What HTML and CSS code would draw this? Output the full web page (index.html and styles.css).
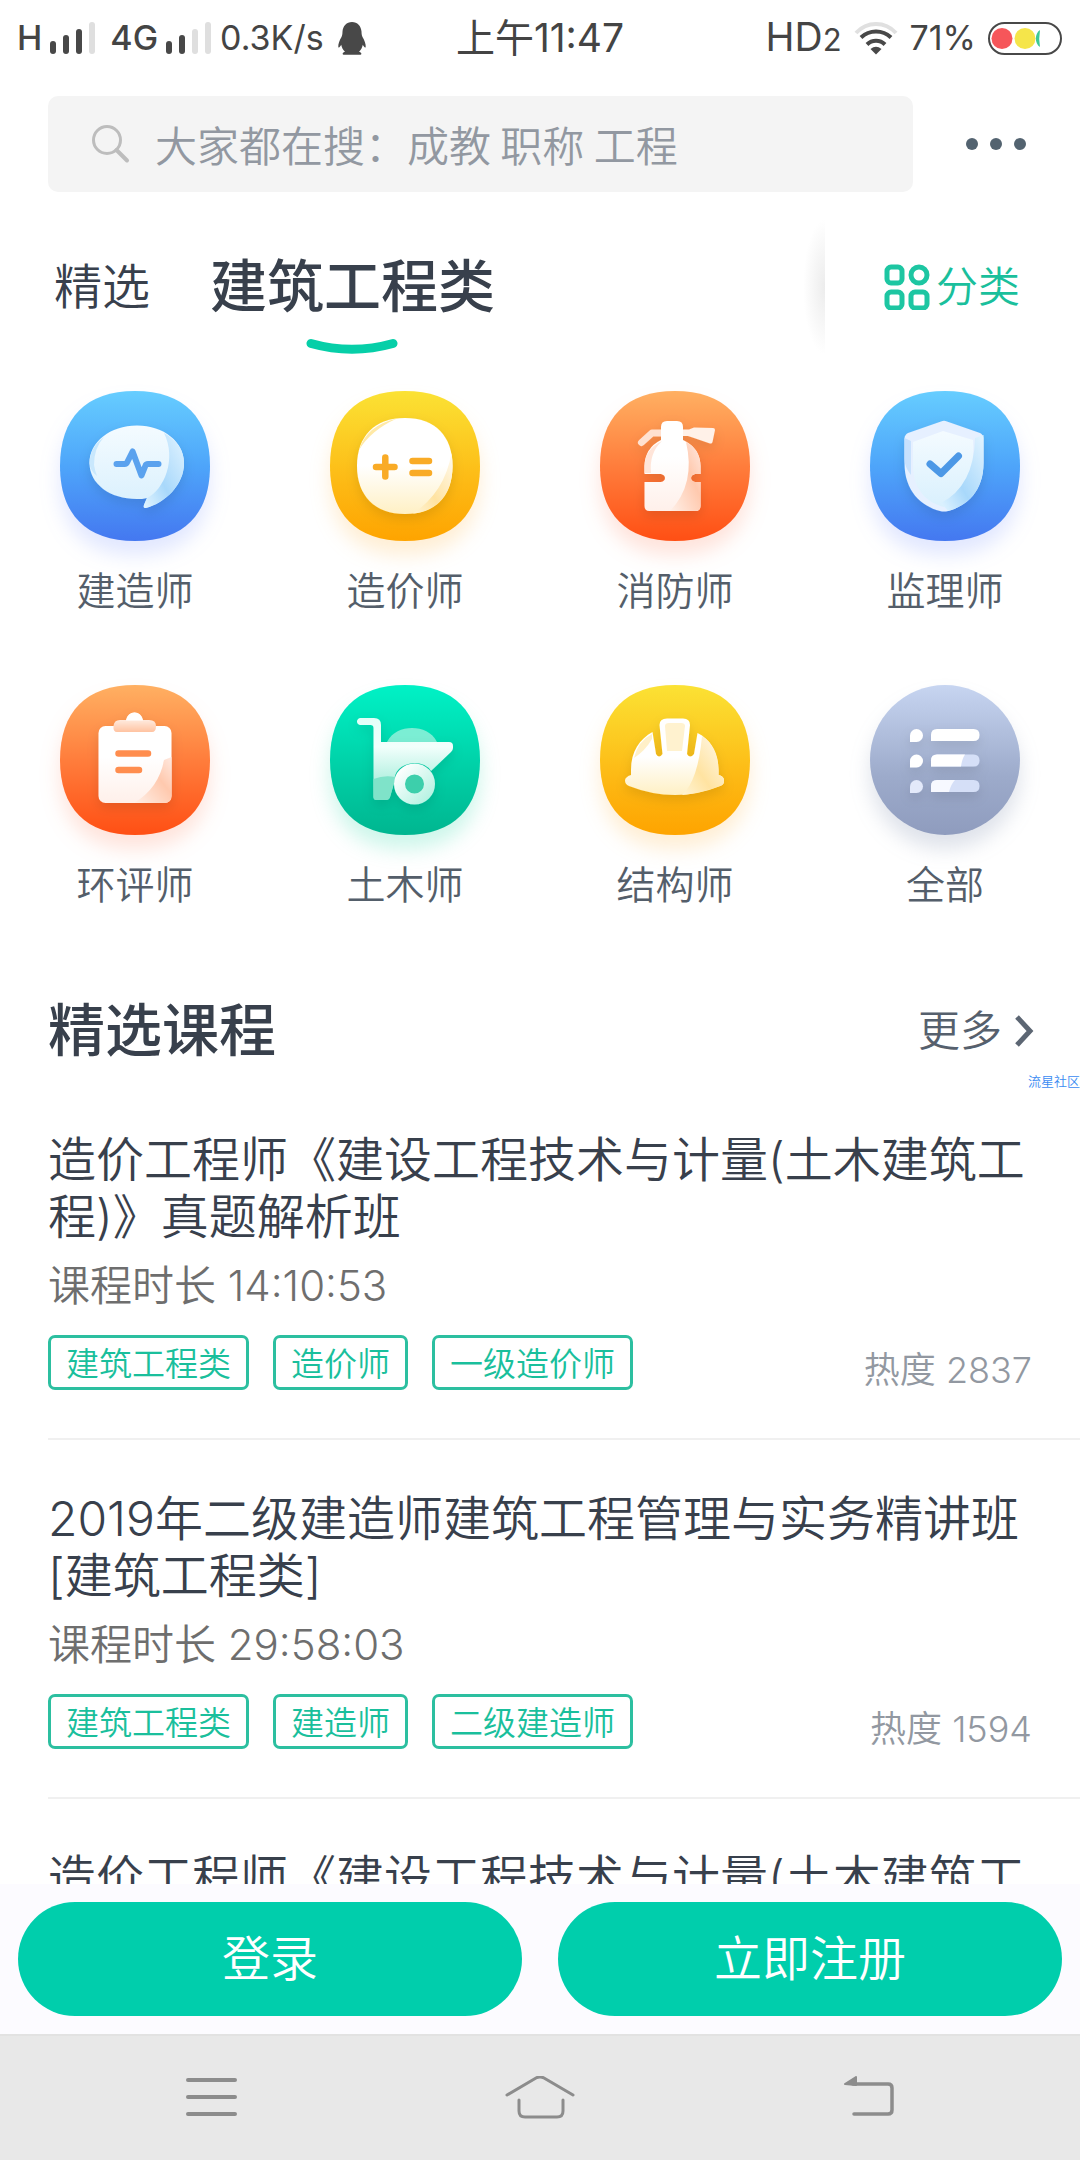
FILE: index.html
```html
<!DOCTYPE html>
<html lang="zh-CN">
<head>
<meta charset="utf-8">
<meta name="viewport" content="width=device-width, initial-scale=1">
<title>建筑工程类</title>
<link rel="stylesheet" href="styles.css">
</head>
<body>
<div class="app">
  <header class="statusbar">
    <div class="status-group">
      <span class="status-net">H</span>
      <svg class="signal" width="46" height="33" viewBox="0 0 46 33" aria-hidden="true">
        <g fill="#484848"><rect x="0" y="19" width="6" height="13" rx="3"/><rect x="13" y="13" width="6" height="19" rx="3"/><rect x="26" y="7" width="6" height="25" rx="3"/></g>
        <rect x="39" y="0" width="6" height="32" rx="3" fill="#dfdfdf"/>
      </svg>
      <span class="status-net">4G</span>
      <svg class="signal" width="46" height="33" viewBox="0 0 46 33" aria-hidden="true">
        <g fill="#484848"><rect x="0" y="19" width="6" height="13" rx="3"/><rect x="13" y="13" width="6" height="19" rx="3"/></g>
        <g fill="#dfdfdf"><rect x="26" y="7" width="6" height="25" rx="3"/><rect x="39" y="0" width="6" height="32" rx="3"/></g>
      </svg>
      <span class="status-speed">0.3K/s</span>
      <svg class="penguin" width="28" height="33" viewBox="0 0 28 33" aria-hidden="true">
        <path fill="#484848" d="M14 0C8.500 0 5 4 4.500 9.500C4.400 12 4.300 13 3.500 15C1.500 18.500 0 22 .3 25C.8 26.600 2.300 24.500 3.200 22.800C3.800 25.800 5 28 7 29.700C4.500 30.200 4 32.500 5.500 32.700H12.500C13.500 32.700 14.500 32.700 15.500 32.700H22.500C24 32.500 23.500 30.200 21 29.700C23 28 24.200 25.800 24.800 22.800C25.700 24.500 27.200 26.600 27.700 25C28 22 26.500 18.500 24.500 15C23.700 13 23.600 12 23.500 9.500C23 4 19.500 0 14 0Z"/>
      </svg>
    </div>
    <time class="status-time">上午11:47</time>
    <div class="status-group status-right">
      <span class="status-hd">HD<small>2</small></span>
      <svg width="44" height="33" viewBox="0 0 44 33" fill="none" aria-hidden="true">
        <path d="M2 11C13-1 31-1 42 11" stroke="#e0e0e0" stroke-width="4"/>
        <path d="M7 15.500C15.500 7.500 28.500 7.500 37 15.500M13 22.500C18 17.500 26 17.500 31 22.500" stroke="#484848" stroke-width="4"/>
        <path d="M16.500 27Q22 22.500 27.500 27L22 32.500Z" fill="#484848"/>
      </svg>
      <span class="status-pct">71%</span>
      <svg width="75" height="33" viewBox="0 0 75 33" aria-hidden="true">
        <rect x="1" y="1" width="72" height="31" rx="15.500" fill="#fff" stroke="#484848" stroke-width="2"/>
        <circle cx="14" cy="16.500" r="10.500" fill="#f6565a"/><circle cx="37" cy="16.500" r="10.500" fill="#f5e54a"/>
        <path d="M52 8C46.500 11.500 46.500 21.500 52 25Q50.500 16.500 52 8Z" fill="#3cc995"/>
      </svg>
    </div>
  </header>

  <form class="searchrow" role="search">
    <label class="searchbox">
      <svg width="40" height="40" viewBox="0 0 40 40" fill="none" stroke="#bdbdbd" aria-hidden="true">
        <circle cx="16" cy="16" r="13.500" stroke-width="3"/><path d="M25.500 26L36 36.500" stroke-width="4" stroke-linecap="round"/>
      </svg>
      <input type="search" aria-label="搜索" placeholder="大家都在搜：成教 职称 工程">
    </label>
    <button class="dots" type="button" aria-label="更多操作">
      <svg width="62" height="14" viewBox="0 0 62 14" fill="#536370"><circle cx="7" cy="7" r="6"/><circle cx="31" cy="7" r="6"/><circle cx="55" cy="7" r="6"/></svg>
    </button>
  </form>

  <nav class="tabs">
    <a class="tab" href="#featured">精选</a>
    <a class="tab tab-active" href="#building">建筑工程类
      <svg class="tab-mark" width="92" height="18" viewBox="0 0 92 18" fill="none" aria-hidden="true"><path d="M5 5.500Q46 17 87 5.500" stroke="#06cfa8" stroke-width="9" stroke-linecap="round"/></svg>
    </a>
    <span class="tab-shade"></span>
    <a class="classify" href="#all">
      <svg width="46" height="46" viewBox="0 0 46 46" fill="none" stroke="#1dc6a2" stroke-width="5" aria-hidden="true">
        <rect x="3" y="3" width="15" height="16" rx="4"/><circle cx="35" cy="11" r="8"/><rect x="3" y="28" width="15" height="16" rx="4"/><rect x="27" y="28" width="16" height="16" rx="4"/>
      </svg>分类
    </a>
  </nav>

  <main class="content">
    <svg class="defs" width="0" height="0" aria-hidden="true">
      <defs>
        <linearGradient id="blue" x1="0" y1="0" x2="0" y2="1"><stop offset="0" stop-color="#66cdff"/><stop offset=".5" stop-color="#4ea5fa"/><stop offset="1" stop-color="#4478f0"/></linearGradient>
        <linearGradient id="yellow" x1="0" y1="0" x2="0" y2="1"><stop offset="0" stop-color="#fbe234"/><stop offset=".6" stop-color="#fdba15"/><stop offset="1" stop-color="#fea400"/></linearGradient>
        <linearGradient id="orange" x1="0" y1="0" x2="0" y2="1"><stop offset="0" stop-color="#ffb062"/><stop offset=".5" stop-color="#ff7d3c"/><stop offset="1" stop-color="#ff4f14"/></linearGradient>
        <linearGradient id="green" x1="0" y1="0" x2="0" y2="1"><stop offset="0" stop-color="#00f2c6"/><stop offset=".6" stop-color="#00cda4"/><stop offset="1" stop-color="#00b690"/></linearGradient>
        <linearGradient id="grey" x1="0" y1="0" x2="0" y2="1"><stop offset="0" stop-color="#c7d5f1"/><stop offset=".6" stop-color="#9dabcb"/><stop offset="1" stop-color="#8f9cbe"/></linearGradient>
        <linearGradient id="w-blue" x1="0" y1="0" x2="0" y2="1"><stop offset="0" stop-color="#f4fbff"/><stop offset="1" stop-color="#d9f0fd"/></linearGradient>
        <linearGradient id="s-blue" x1="1" y1="0" x2="0" y2="1"><stop offset="0" stop-color="#e3f4ff"/><stop offset=".6" stop-color="#a8d8fb"/><stop offset="1" stop-color="#e3f5ff"/></linearGradient>
        <linearGradient id="w-yellow" x1="0" y1="0" x2="0" y2="1"><stop offset=".5" stop-color="#fff"/><stop offset="1" stop-color="#fff0c4"/></linearGradient>
        <linearGradient id="s-yellow" x1="1" y1="0" x2="0" y2="1"><stop offset="0" stop-color="#fffaf0"/><stop offset=".6" stop-color="#ffe3a1"/><stop offset="1" stop-color="#fff4d5"/></linearGradient>
        <linearGradient id="w-orange" x1="0" y1="0" x2="0" y2="1"><stop offset=".4" stop-color="#fff"/><stop offset="1" stop-color="#fff0ea"/></linearGradient>
        <linearGradient id="s-orange" x1="1" y1="0" x2="0" y2="1"><stop offset="0" stop-color="#ffe9e0"/><stop offset=".4" stop-color="#ffc9ae"/><stop offset="1" stop-color="#fff0e8"/></linearGradient>
        <linearGradient id="clip" x1="0" y1="0" x2="0" y2="1"><stop offset=".2" stop-color="#fff6f0"/><stop offset="1" stop-color="#ffc3a1"/></linearGradient>
        <linearGradient id="w-green" x1="0" y1="0" x2="0" y2="1"><stop offset="0" stop-color="#e2fff8"/><stop offset=".35" stop-color="#f2fffc"/><stop offset="1" stop-color="#8ee8d0"/></linearGradient>
        <linearGradient id="wheel" x1="0" y1="0" x2="1" y2="1"><stop offset="0" stop-color="#fff"/><stop offset="1" stop-color="#b5f2e2"/></linearGradient>
        <filter id="inner" x="-30%" y="-30%" width="160%" height="170%"><feDropShadow dx="0" dy="5" stdDeviation="6" flood-color="#000" flood-opacity=".1"/></filter>
        <path id="tile" d="M75 0C124 0 150 27 150 75S124 150 75 150S0 123 0 75S26 0 75 0Z"/>
      </defs>
    </svg>

    <section class="categories">
      <a class="cat" href="#c1">
        <svg class="cat-icon glow-blue" width="150" height="150" viewBox="0 0 150 150" aria-hidden="true">
          <use href="#tile" fill="url(#blue)"/>
          <g filter="url(#inner)">
            <path d="M77 34.500C104 34.500 124 51 124 72C124 94 105 112 85.500 117Q83 117 84 114L87 107C84 108 80 108 77 108C50 108 29.500 93 29.500 72C29.500 51 50 34.500 77 34.500Z" fill="url(#w-blue)"/>
            <path d="M104 42C118 50 124 60 124 72C124 94 105 112 85.500 117Q83 117 84 114L87 107C104 99 117 68 104 42Z" fill="url(#s-blue)"/>
            <path d="M44 46Q34 57 34 74Q35 80 37 85Q30 80 29.500 72Q30 56 44 46Z" fill="#c9e8fd"/>
          </g>
          <path d="M56.500 73H64.500Q66.500 73 67.300 71L72.600 60.500L81.500 84.500L85.500 74.500Q86 73 88 73H98.500" fill="none" stroke="#5ba2ee" stroke-width="6" stroke-linecap="round" stroke-linejoin="round"/>
        </svg>
        <span>建造师</span>
      </a>
      <a class="cat" href="#c2">
        <svg class="cat-icon glow-yellow" width="150" height="150" viewBox="0 0 150 150" aria-hidden="true">
          <use href="#tile" fill="url(#yellow)"/>
          <g filter="url(#inner)">
            <path d="M75 27C105 27 122.500 45 122.500 75S105 123 75 123S27 105 27 75S45 27 75 27Z" fill="url(#w-yellow)"/>
            <path d="M121.500 62Q115 101 83 122.600C108 120 122.500 103 122.500 75Q122.500 68 121.500 62Z" fill="url(#s-yellow)"/>
            <path d="M67 27.500Q37 34 29 59Q41 39 67 27.500Z" fill="#ffe9a6"/>
          </g>
          <path d="M46 76H64.500M55.300 66.500V85.500M82.500 70H99M82.500 82H99" fill="none" stroke="#f9ab26" stroke-width="6.500" stroke-linecap="round"/>
        </svg>
        <span>造价师</span>
      </a>
      <a class="cat" href="#c3">
        <svg class="cat-icon glow-orange" width="150" height="150" viewBox="0 0 150 150" aria-hidden="true">
          <use href="#tile" fill="url(#orange)"/>
          <g filter="url(#inner)">
            <path d="M61 42H52L41.500 51.500" fill="none" stroke="#ffe1d0" stroke-width="7" stroke-linecap="round" stroke-linejoin="round"/>
            <path d="M82 38.500H89L94 36.500L113 37Q115 37 115 39L112.500 51Q112 53 110 52.500L94 47L88 45H82Z" fill="#fff1e8"/>
            <path d="M61 36Q61 30 67 30H77Q83 30 83 36V49Q100 57 100.500 75V83H95Q91 84 91 87T95 91H100.500V115Q100.500 120 95.500 120H49.500Q44.500 120 44.500 115V91H61Q65 90 65 87T61 83H44.500V75Q45 57 61 49Z" fill="url(#w-orange)"/>
            <path d="M86 51Q100 58 100.500 75V83H95Q91 84 91 87T95 91H100.500V115Q100.500 120 95.500 120H70Q96 93 86 51Z" fill="url(#s-orange)"/>
            <path d="M62 50Q49 62 51 82H44.500V75Q45 58 62 50Z" fill="#ffe5d9"/>
          </g>
        </svg>
        <span>消防师</span>
      </a>
      <a class="cat" href="#c4">
        <svg class="cat-icon glow-blue" width="150" height="150" viewBox="0 0 150 150" aria-hidden="true">
          <use href="#tile" fill="url(#blue)"/>
          <g filter="url(#inner)">
            <path d="M71 30.500Q74 29 77 30.500L110 42Q113.500 44 113.500 47.500V72C113.500 100 97 115 78 120Q74 121 70 120C51 115 34.500 100 34.500 72V47.500Q34.500 44 38 42Z" fill="#e6f0ff"/>
            <path d="M73 40L43 51V74C43 100 58 112 74 116C93 108 105 84 103 49Z" fill="url(#w-blue)"/>
            <path d="M105 47L113.500 44V72C113.500 100 97 115 78 120L71 112Q104 95 105 47Z" fill="url(#s-blue)"/>
            <path d="M34.500 47L41 50V84Q34.500 76 34.500 68Z" fill="#c8e1fd"/>
          </g>
          <path d="M60 73L71 82.500L88.500 65" fill="none" stroke="#4c98e6" stroke-width="7" stroke-linecap="round" stroke-linejoin="round"/>
        </svg>
        <span>监理师</span>
      </a>
      <a class="cat" href="#c5">
        <svg class="cat-icon glow-orange" width="150" height="150" viewBox="0 0 150 150" aria-hidden="true">
          <use href="#tile" fill="url(#orange)"/>
          <g filter="url(#inner)">
            <rect x="38.500" y="41" width="73" height="77" rx="7" fill="url(#w-orange)"/>
            <path d="M111.500 72V111Q111.500 118 104.500 118H74Q99 103 104 75Z" fill="url(#s-orange)"/>
            <path d="M53.500 41Q54 35 60 35H66Q68 27.500 74.500 27.500T83 35H89Q96 35 96 41Q96 47 92 47H57Q53 47 53.500 41Z" fill="url(#clip)"/>
            <path d="M66 35.500Q68 27.500 74.500 27.500T83 35.500Z" fill="#fff"/>
          </g>
          <path d="M58.500 68.500H88M58.500 85H79" stroke="#ff8d4e" stroke-width="6.500" stroke-linecap="round"/>
        </svg>
        <span>环评师</span>
      </a>
      <a class="cat" href="#c6">
        <svg class="cat-icon glow-green" width="150" height="150" viewBox="0 0 150 150" aria-hidden="true">
          <use href="#tile" fill="url(#green)"/>
          <path d="M57 57C62 47 72 43 82 43S102 47 107 57Z" fill="#7beed4"/>
          <g filter="url(#inner)">
            <path d="M30 33H44Q51 33 51 40V57H119Q123 57 123 61V63Q123 65 121 67L101 86Q96 78 84 78Q64 80 64 98L60 112Q59 115 56 115H46.500Q43.500 115 43.500 112V43Q43.500 40 40.500 40H30Q27 39 27 36.500T30 33Z" fill="url(#w-green)"/>
            <path d="M43.500 94Q54 90 65 92Q64 96 64 98L60 112Q59 115 56 115H46.500Q43.500 115 43.500 112Z" fill="#7fe3c9"/>
            <circle cx="84.500" cy="99" r="15" fill="#3ccfab" stroke="url(#wheel)" stroke-width="11"/>
          </g>
        </svg>
        <span>土木师</span>
      </a>
      <a class="cat" href="#c7">
        <svg class="cat-icon glow-yellow" width="150" height="150" viewBox="0 0 150 150" aria-hidden="true">
          <use href="#tile" fill="url(#yellow)"/>
          <g filter="url(#inner)">
            <path d="M31 90V85C31 66 40 54 52.500 47L56 69Q59 74 62.500 69L59.500 40Q59.500 33.500 67 33.500H83Q90 33.500 90 40L87 69Q90 74 94 69L97.500 48C110 54 118.500 68 118.500 85V90Q124 91 124 95.500T120 101Q98 110 75 110T29 101Q25 99 25 95.500T31 90Z" fill="url(#w-yellow)"/>
            <path d="M102 51C112 57 118.500 69 118.500 85V90Q124 91 124 95.500T120 101Q102 108 82 110Q98 96 102 51Z" fill="url(#s-yellow)"/>
            <path d="M65 41Q65 38 69 38H81Q85 38 85 41L82 66H67Z" fill="#fff2cf"/>
            <path d="M52 49Q38 56 34 73Q45 66 52 54Z" fill="#fff0c8"/>
          </g>
        </svg>
        <span>结构师</span>
      </a>
      <a class="cat" href="#c8">
        <svg class="cat-icon glow-grey" width="150" height="150" viewBox="0 0 150 150" aria-hidden="true">
          <circle cx="75" cy="75" r="75" fill="url(#grey)"/>
          <g filter="url(#inner)">
            <path d="M46.500 44A6.500 6.500 0 1 1 46.500 57H40V50.500A6.500 6.500 0 0 1 46.500 44ZM46.500 69.500A6.500 6.500 0 1 1 46.500 82.500H40V76A6.500 6.500 0 0 1 46.500 69.500Z" fill="#fff"/>
            <path d="M46.500 95A6.500 6.500 0 1 1 46.500 108H40V101.500A6.500 6.500 0 0 1 46.500 95Z" fill="#e3e9fa"/>
            <path d="M67 44H103.500Q109.500 44 109.500 50T103.500 56H61V50Q61 44 67 44Z" fill="#fff"/>
            <path d="M67 69.500H103.500Q109.500 69.500 109.500 75.500T103.500 81.500H61V75.500Q61 69.500 67 69.500Z" fill="#d5dff7"/>
            <path d="M67 69.500H95Q92 74 91 81.500H61V75.500Q61 69.500 67 69.500Z" fill="#fff"/>
            <path d="M67 95H103.500Q109.500 95 109.500 101T103.500 107H61V101Q61 95 67 95Z" fill="#d5dff7"/>
            <path d="M67 95H85Q81 99 79 107H61V101Q61 95 67 95Z" fill="#f7f9ff"/>
          </g>
        </svg>
        <span>全部</span>
      </a>
    </section>

    <section class="courses">
      <div class="section-head">
        <h2>精选课程</h2>
        <a class="more" href="#more">更多
          <svg width="20" height="32" viewBox="0 0 20 32" fill="none" aria-hidden="true"><path d="M3 2L16 16L3 30" stroke="#5c6673" stroke-width="5"/></svg>
        </a>
        <span class="watermark">流星社区</span>
      </div>
      <article class="course">
        <h3>造价工程师《建设工程技术与计量(土木建筑工程)》真题解析班</h3>
        <p class="duration">课程时长 14:10:53</p>
        <div class="meta"><span class="tag">建筑工程类</span><span class="tag">造价师</span><span class="tag">一级造价师</span><span class="heat">热度 2837</span></div>
      </article>
      <article class="course">
        <h3>2019年二级建造师建筑工程管理与实务精讲班[建筑工程类]</h3>
        <p class="duration">课程时长 29:58:03</p>
        <div class="meta"><span class="tag">建筑工程类</span><span class="tag">建造师</span><span class="tag">二级建造师</span><span class="heat">热度 1594</span></div>
      </article>
      <article class="course">
        <h3>造价工程师《建设工程技术与计量(土木建筑工</h3>
      </article>
    </section>
  </main>

  <div class="actions">
    <button class="action" type="button">登录</button>
    <button class="action" type="button">立即注册</button>
  </div>

  <nav class="sysnav">
    <button type="button" aria-label="菜单"><svg width="72" height="44" viewBox="0 0 72 44" stroke="#8c8c8c" stroke-width="4" stroke-linecap="round"><path d="M13 4H60M13 21H60M13 38H60"/></svg></button>
    <button type="button" aria-label="主页"><svg width="72" height="44" viewBox="0 0 72 44" fill="none" stroke="#8c8c8c" stroke-width="3" stroke-linecap="round" stroke-linejoin="round"><path d="M3 19L32 2Q36 0 40 2L69 19M15 24V35Q15 41 21 41H53Q59 41 59 35V24"/></svg></button>
    <button type="button" aria-label="返回"><svg width="72" height="44" viewBox="0 0 72 44" fill="none" stroke="#8c8c8c" stroke-width="3.500" stroke-linecap="round" stroke-linejoin="round"><path d="M20 8H55Q59 8 59 12V34Q59 38 55 38H21"/><path d="M12 8L23 1V9Z" fill="#8c8c8c" stroke-width="2"/></svg></button>
  </nav>
</div>
</body>
</html>
```
FILE: styles.css
```css
* { box-sizing: border-box; }

body {
  margin: 0;
  background: #fff;
  color: #38404c;
  font-family: Inter, "Noto Sans CJK SC", sans-serif;
  font-weight: 350;
}

h2, h3, p { margin: 0; font-weight: inherit; }
a { color: inherit; text-decoration: none; }
button { border: 0; background: none; padding: 0; font: inherit; color: inherit; }
svg { display: block; flex: none; }

.app { display: flex; flex-direction: column; height: 100vh; }

/* status bar */
.statusbar {
  flex: none;
  display: grid;
  grid-template-columns: 1fr auto 1fr;
  align-items: center;
  height: 76px;
  padding: 0 17px;
  color: #444;
  font-size: 34px;
  font-weight: 400;
  line-height: 40px;
}
.status-group { display: flex; align-items: center; gap: 8px; }
.status-right { justify-content: flex-end; gap: 12px; }
.status-net { font-weight: 500; }
.signal + .status-net { margin-left: 6px; }
.penguin { margin-left: 6px; }
.status-time { font-size: 39px; }
.status-hd { font-size: 39px; }
.status-hd small { font-size: 31px; }

/* search */
.searchrow { flex: none; display: flex; align-items: center; margin-top: 20px; padding: 0 48px; }
.searchbox {
  flex: 1;
  display: flex;
  align-items: center;
  gap: 24px;
  height: 96px;
  padding: 0 43px;
  border-radius: 10px;
  background: #f4f4f4;
}
.searchbox input {
  flex: 1;
  min-width: 0;
  padding: 0;
  border: 0;
  outline: 0;
  background: none;
  font-family: "Noto Sans CJK SC", sans-serif;
  font-size: 42px;
  font-weight: 350;
  line-height: 60px;
}
.searchbox input::placeholder { color: #9298a1; opacity: 1; }
.dots { margin-left: 52px; margin-right: 5px; }

/* tabs */
.tabs { flex: none; display: flex; align-items: center; height: 142px; margin-top: 24px; padding: 0 60px 0 54px; }
.tab { font-size: 48px; line-height: 60px; }
.tab-active { position: relative; margin-left: 60px; font-size: 57px; font-weight: 500; }
.tab-mark { position: absolute; left: 50%; top: 81px; margin-left: -47px; }
.tab-shade {
  width: 22px;
  height: 136px;
  margin-left: auto;
  background: radial-gradient(ellipse at right, #ececec, #fff 70%);
}
.classify { display: flex; align-items: center; gap: 6px; margin-left: 59px; color: #1abf9c; font-size: 42px; line-height: 60px; }

/* scrolling content */
.content { flex: 1; min-height: 0; overflow-y: auto; scrollbar-width: none; padding-top: 33px; }
.defs { position: absolute; }

.categories { display: grid; grid-template-columns: repeat(4, 1fr); row-gap: 70px; }
.cat { display: flex; flex-direction: column; align-items: center; gap: 26px; color: #545e6a; font-size: 39px; line-height: 48px; }
.cat-icon { overflow: visible; }
.glow-blue { filter: drop-shadow(0 14px 10px rgba(80, 110, 255, .17)); }
.glow-yellow { filter: drop-shadow(0 14px 10px rgba(255, 170, 40, .2)); }
.glow-orange { filter: drop-shadow(0 14px 10px rgba(255, 90, 40, .17)); }
.glow-green { filter: drop-shadow(0 14px 10px rgba(0, 210, 150, .2)); }
.glow-grey { filter: drop-shadow(0 14px 10px rgba(90, 110, 150, .2)); }

/* course list */
.section-head { position: relative; display: flex; align-items: center; justify-content: space-between; margin: 84px 0 12px; padding: 0 46px 0 48px; line-height: 76px; }
.section-head h2 { font-size: 57px; font-weight: 500; }
.more { display: flex; align-items: center; gap: 12px; color: #56606d; font-size: 42px; }
.watermark { position: absolute; right: 0; top: 79px; color: #3b8cf2; font-size: 13px; line-height: 18px; }

.course { margin-left: 48px; padding: 50px 48px 48px 0; border-bottom: 2px solid #f0f0f0; }
.course h3 { font-size: 48px; line-height: 57px; }
.duration { margin-top: 16px; color: #6e6e6e; font-size: 42px; line-height: 50px; }
.meta { display: flex; align-items: flex-end; gap: 24px; margin-top: 24px; }
.tag {
  height: 55px;
  padding: 0 15px;
  border: 3px solid #2cbfa0;
  border-radius: 7px;
  color: #1abf9c;
  font-family: "Noto Sans CJK SC", sans-serif;
  font-size: 33px;
  line-height: 49px;
}
.heat { margin-left: auto; color: #9298a1; font-size: 36px; line-height: 40px; }

/* bottom buttons */
.actions { flex: none; display: flex; gap: 36px; padding: 18px; background: #fcfbff; }
.action { flex: 1; height: 114px; border-radius: 57px; background: #00ceac; color: #fff; font-size: 48px; line-height: 60px; }

.sysnav { flex: none; display: flex; justify-content: space-between; align-items: center; height: 126px; padding: 0 175px; border-top: 2px solid #e2e2e2; background: #e8e8e8; }
```
